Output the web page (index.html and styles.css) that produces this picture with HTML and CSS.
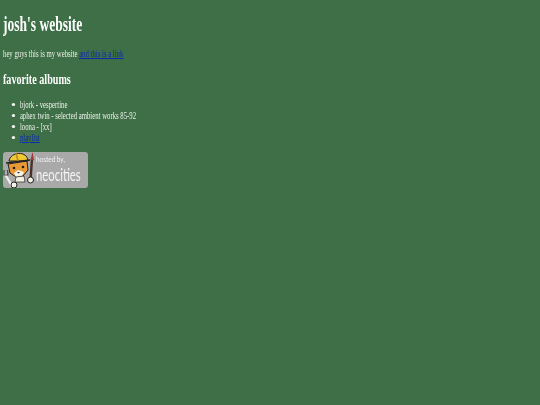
FILE: index.html
```html
<!DOCTYPE html>
<html lang="en">
<head>
    <meta charset="UTF-8">
    <title>josh's website</title>
    <link rel="stylesheet" href="styles.css">
</head>
<body>
    <div class="page">
        <h1>josh's website</h1>
        <p>hey guys this is my website <a href="#">and this is a link</a></p>
        <h2>favorite albums</h2>
        <ul>
            <li>bjork - vespertine</li>
            <li>aphex twin - selected ambient works 85-92</li>
            <li>loona - [xx]</li>
            <li><a href="#">playlist</a></li>
        </ul>
    </div>
    <a href="#" class="badge">
        <svg class="mascot" width="32" height="37" viewBox="0 0 32 37">
            <!-- wrench -->
            <path d="M2 22 L9 34" stroke="#eee" stroke-width="2.4" fill="none"/>
            <path d="M1 18 L1 23 L5 23 L4.500 18" stroke="#444" stroke-width="1.200" fill="none"/>
            <circle cx="11" cy="33" r="3" fill="#f4f0e4" stroke="#222"/>
            <!-- head -->
            <path d="M5 12 L7 21 L13 25 L20 24 L25 18 L24 9 Z" fill="#e99a35" stroke="#222"/>
            <path d="M11 21 L15 18 L21 20 L19 24 L13 25 Z" fill="#f8f4ea"/>
            <circle cx="11" cy="16" r="1.300" fill="#222"/>
            <circle cx="20" cy="15" r="1.300" fill="#222"/>
            <path d="M14 20 L17 20 L15.500 21.500 Z" fill="#222"/>
            <!-- hard hat -->
            <path d="M6 9 C7 3 14 0 20 2 C23 3 25 6 25 9 Z" fill="#f0c832" stroke="#222"/>
            <path d="M3 11 L27 8" stroke="#222" stroke-width="1.600"/>
            <path d="M13 1 L15 9" stroke="#b88a1c" stroke-width="1.500"/>
            <!-- body -->
            <path d="M13 25 L12 30 L22 30 L21 24 Z" fill="#f4f0e4" stroke="#222" stroke-width=".7"/>
            <!-- paintbrush -->
            <path d="M29 7 L27.500 28" stroke="#4a3028" stroke-width="2.400"/>
            <path d="M29.500 0 L31 8 L27.500 8 Z" fill="#a8353a"/>
            <circle cx="27.500" cy="28" r="3" fill="#f4f0e4" stroke="#222"/>
        </svg>
        <span class="badge-text">
            <span class="hosted">hosted by,</span>
            <span class="neo">neocities</span>
        </span>
    </a>
</body>
</html>
```

FILE: styles.css
```css
body {
    margin: 3px;
    background-color: #3e6f46;
    color: #eef2ec;
    font-family: "Liberation Serif", serif;
    font-size: 10px;
    line-height: 11px;
}

/* the text in the shot is squeezed sideways */
.page {
    width: 400px;
    transform: scaleX(0.675);
    transform-origin: left top;
    filter: blur(0.2px);
}

h1 {
    font-size: 20px;
    line-height: 20px;
    margin: 11px 0 14px;
    color: #fff;
}

h2 {
    font-size: 15px;
    line-height: 15px;
    margin: 13px 0 12px;
    color: #fff;
}

p {
    margin: 0;
}

ul {
    margin: 0 0 9px;
    padding-left: 25px;
    list-style: none;
}

li {
    position: relative;
}

li::before {
    content: "";
    position: absolute;
    left: -12px;
    top: 4px;
    width: 4.5px;
    height: 3px;
    border-radius: 50%;
    background-color: #eef2ec;
}

a {
    color: #0a2ab0;
}

.badge {
    display: flex;
    align-items: center;
    width: 85px;
    height: 36px;
    background-color: #a9a9a9;
    border-radius: 3px;
    text-decoration: none;
    filter: blur(0.2px);
}

.mascot {
    flex: none;
}

.badge-text {
    display: flex;
    flex-direction: column;
    margin-left: 1px;
    margin-top: -1px;
    color: #f4f4f4;
    font-family: "Lato", sans-serif;
}

.hosted {
    font-size: 8px;
    line-height: 9px;
    transform: scaleX(0.8);
    transform-origin: left;
    white-space: nowrap;
}

.neo {
    font-size: 18px;
    line-height: 20px;
    transform: scaleX(0.63);
    transform-origin: left;
    white-space: nowrap;
}
```
